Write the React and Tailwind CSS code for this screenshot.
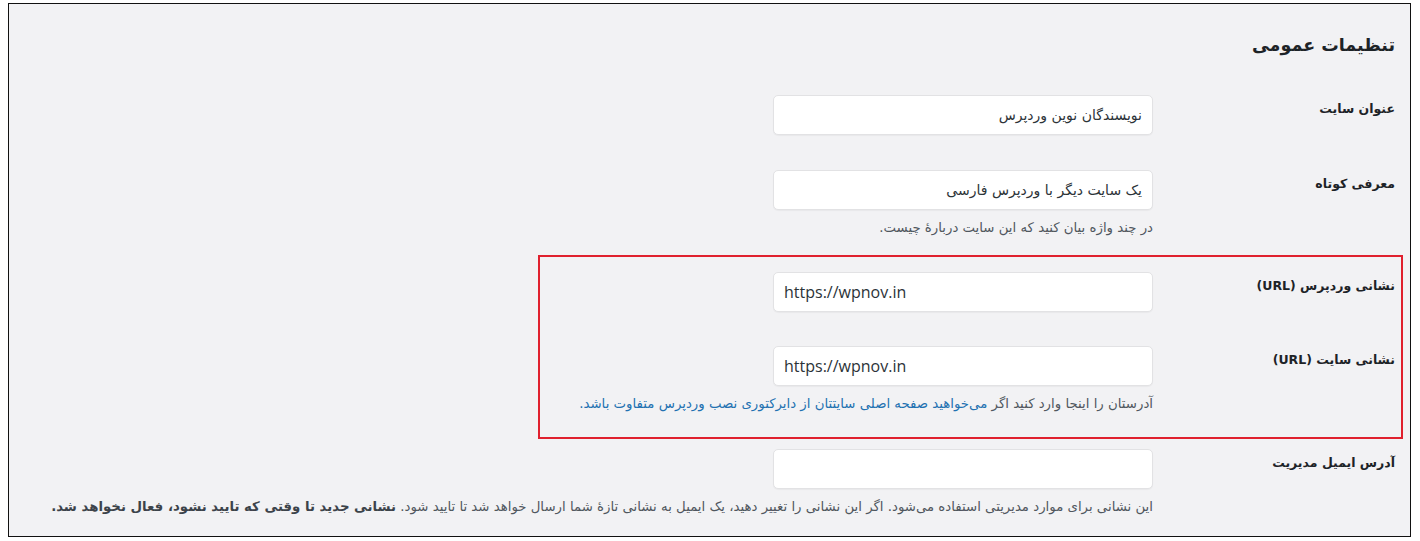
import React from 'react';

const fa = { fontFamily: '"DejaVu Sans", sans-serif' };

const Field = ({ value, ltr }) => (
  <div
    dir={ltr ? 'ltr' : 'rtl'}
    className="w-[380px] h-[40px] bg-white border border-[#e2e2e4] rounded-[5px] shadow-[0_1px_1px_rgba(0,0,0,0.04)] flex items-center px-[10px]"
  >
    <span
      className={ltr ? 'text-[16px] text-[#2c3338]' : 'text-[14px] text-[#2c3338]'}
      style={ltr ? { fontFamily: '"Open Sans", sans-serif' } : fa}
    >
      {value}
    </span>
  </div>
);

const Row = ({ label, value, ltr, children, inset, className = '' }) => (
  <div className={`flex items-start ${inset ? 'pr-[6px]' : 'pr-[15px]'} ${className}`}>
    <div className="w-[242px] shrink-0 pt-[4px] text-[12.5px] leading-[20px] font-bold text-[#1d2327]">
      {label}
    </div>
    <div className="flex flex-col items-start">
      <Field value={value} ltr={ltr} />
      {children && (
        <div className="mt-[8px] text-[13.3px] leading-[20px] text-[#50575e] whitespace-nowrap">
          {children}
        </div>
      )}
    </div>
  </div>
);

export default function App() {
  return (
    <div className="w-[1420px] h-[541px] bg-white pt-[3px] pl-[8px] pr-[9px] pb-[4px]" style={fa}>
      <div dir="rtl" className="h-[534px] border border-[#111] bg-[#f2f2f4] overflow-hidden">
        <h1 className="pt-[27px] pr-[15px] text-[17.5px] leading-[28px] font-bold text-[#1d2327]">
          تنظیمات عمومی
        </h1>

        <Row label="عنوان سایت" value="نویسندگان نوین وردپرس" className="mt-[36px]" />

        <Row label="معرفی کوتاه" value="یک سایت دیگر با وردپرس فارسی" className="mt-[35px]">
          در چند واژه بیان کنید که این سایت دربارهٔ چیست.
        </Row>

        {/* highlighted URL block */}
        <div className="mt-[17px] mr-[7px] w-[865px] border-2 border-[#e0202e] pt-[15px] pb-[23px]">
          <Row label="نشانی وردپرس (URL)" value="https://wpnov.in" ltr inset />
          <Row label="نشانی سایت (URL)" value="https://wpnov.in" ltr inset className="mt-[34px]">
            آدرستان را اینجا وارد کنید اگر{' '}
            <span className="text-[#2271b1]">
              می‌خواهید صفحه اصلی سایتتان از دایرکتوری نصب وردپرس متفاوت باشد.
            </span>
          </Row>
        </div>

        <Row label="آدرس ایمیل مدیریت" value="" className="mt-[10px]">
          این نشانی برای موارد مدیریتی استفاده می‌شود. اگر این نشانی را تغییر دهید، یک ایمیل به نشانی تازهٔ شما ارسال خواهد شد تا تایید شود.{' '}
          <strong className="font-bold text-[#3c434a]">نشانی جدید تا وقتی که تایید نشود، فعال نخواهد شد.</strong>
        </Row>
      </div>
    </div>
  );
}
